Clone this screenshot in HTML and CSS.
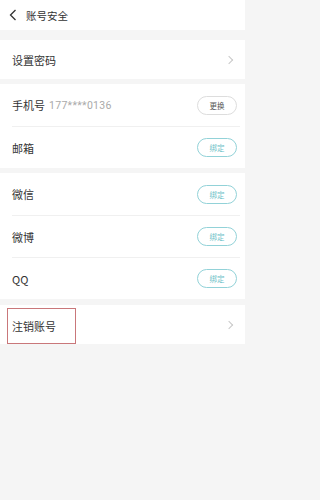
FILE: index.html
```html
<!DOCTYPE html>
<html lang="zh">
<head>
<meta charset="utf-8">
<link rel="stylesheet" href="styles.css">
</head>
<body>
<div class="page">
<div class="header">
  <svg class="back" width="10" height="12" viewBox="0 0 10 12"><path d="M7.5 1 L2.5 6 L7.5 11" fill="none" stroke="#333" stroke-width="1.3"/></svg>
  <span class="title">账号安全</span>
</div>
<div class="group g1">
  <div class="row single"><span class="label">设置密码</span><span class="chev"></span></div>
</div>
<div class="group g2">
  <div class="row"><span class="label">手机号</span><span class="phone">177****0136</span><span class="btn gray">更换</span></div>
  <div class="row"><span class="label">邮箱</span><span class="btn teal">绑定</span></div>
</div>
<div class="group g2">
  <div class="row"><span class="label">微信</span><span class="btn teal">绑定</span></div>
  <div class="row"><span class="label">微博</span><span class="btn teal">绑定</span></div>
  <div class="row"><span class="label">QQ</span><span class="btn teal">绑定</span></div>
</div>
<div class="group g3">
  <div class="row single cancel"><span class="boxed">注销账号</span><span class="chev"></span></div>
</div>
</div>
</body>
</html>
```
FILE: styles.css
```css
html, body {
  margin: 0;
  padding: 0;
  background: #f5f5f5;
  font-family: "Noto Sans CJK SC", "Noto Sans", sans-serif;
  color: #333;
}
.page {
  width: 245px;
  min-height: 500px;
  background: #f5f5f5;
}
.header {
  height: 30px;
  background: #fff;
  display: flex;
  align-items: center;
  padding-left: 8px;
}
.back { margin-right: 8px; }
.title { font-size: 10.5px; color: #333; }
.group {
  background: #fff;
  padding-left: 12px;
}
.g1 { margin-top: 10px; }
.g2 { margin-top: 5px; }
.g3 { margin-top: 6px; }
.row {
  height: 41px;
  display: flex;
  align-items: center;
  border-top: 1px solid #f0f0f0;
  margin-right: 5px;
  padding-right: 2px;
}
.row:first-child { border-top: none; height: 42px; }
.row.single { height: 39px; }
.label { font-size: 11px; color: #333; }
.phone { font-size: 10.5px; color: #aaa; margin-left: 4px; letter-spacing: 0.3px; font-family: "Roboto", "Noto Sans", sans-serif; }
.btn {
  margin-left: auto;
  width: 38px;
  height: 17px;
  border-radius: 10px;
  font-size: 7.5px;
  display: flex;
  align-items: center;
  justify-content: center;
  margin-right: 1px;
}
.btn.gray { border: 1px solid #ddd; color: #555; }
.btn.teal { border: 1px solid #92d2d8; color: #6dbfc8; }
.chev {
  margin-left: auto;
  width: 5px;
  height: 5px;
  border-top: 1px solid #c8c8c8;
  border-right: 1px solid #c8c8c8;
  transform: rotate(45deg);
  margin-right: 6px;
}
.cancel { align-items: flex-end; }
.cancel .chev { align-self: center; }
.boxed {
  font-size: 11px;
  color: #333;
  height: 34px;
  display: flex;
  align-items: center;
  border: 1px solid #c9777a;
  margin-left: -5px;
  padding: 0 19px 0 4px;
}
```
